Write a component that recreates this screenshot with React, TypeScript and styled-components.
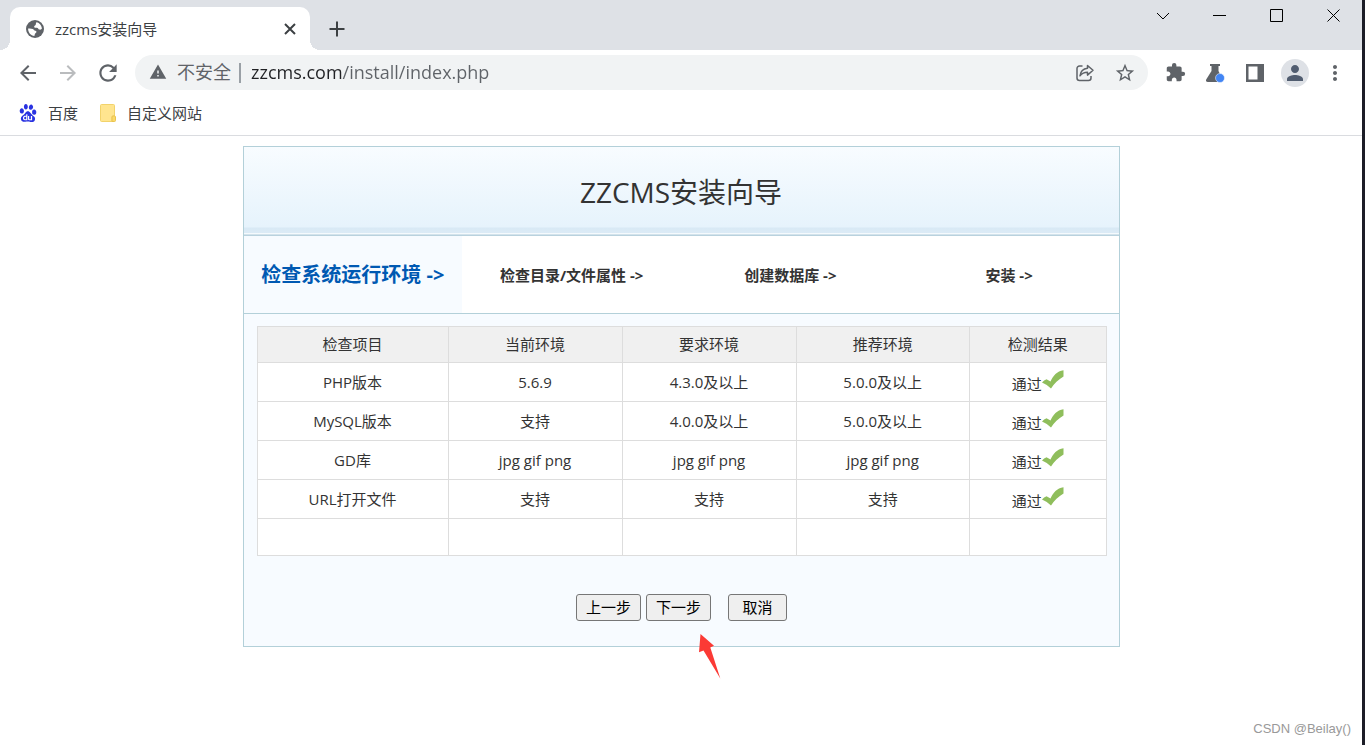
import React from 'react';
import styled, { createGlobalStyle } from 'styled-components';
import {
  MdArrowBack,
  MdArrowForward,
  MdExtension,
  MdMoreVert,
  MdPerson,
  MdRefresh,
  MdStarBorder,
  MdWarning,
} from 'react-icons/md';
import { SiBaidu } from 'react-icons/si';

const GlobalStyle = createGlobalStyle`
  * { box-sizing: border-box; }
  body {
    margin: 0;
    background: #fff;
    color: #333;
    font-family: "Open Sans", "Noto Sans CJK SC", sans-serif;
    font-size: 15px;
    line-height: 20px;
  }
  svg { display: block; flex: none; }
  button, input { font: inherit; }
`;

const Window = styled.div`
  position: relative;
  display: flex;
  flex-direction: column;
  min-height: 100vh;
  border-right: 3px solid #1c1d27;
`;

/* ---- Browser frame ---- */

const TabStrip = styled.header`
  display: flex;
  align-items: flex-start;
  height: 50px;
  padding-left: 10px;
  background: #dee1e6;
`;

const Tab = styled.div`
  position: relative;
  display: flex;
  align-items: center;
  width: 300px;
  height: 43px;
  margin-top: 7px;
  padding: 0 9px 0 16px;
  border-radius: 10px 10px 0 0;
  background: #fff;
  color: #3c4043;

  &::before,
  &::after {
    content: '';
    position: absolute;
    bottom: 0;
    width: 10px;
    height: 10px;
  }
  &::before {
    right: 100%;
    background: radial-gradient(circle at 0 0, transparent 10px, #fff 10px);
  }
  &::after {
    left: 100%;
    background: radial-gradient(circle at 100% 0, transparent 10px, #fff 10px);
  }
`;

const TabTitle = styled.span`
  flex: 1;
  margin-left: 11px;
  white-space: nowrap;
`;

const IconButton = styled.button<{ $width?: number; $height?: number; $color?: string }>`
  display: flex;
  flex: none;
  align-items: center;
  justify-content: center;
  width: ${(p) => p.$width ?? 40}px;
  height: ${(p) => p.$height ?? 40}px;
  padding: 0;
  border: 0;
  background: none;
  color: ${(p) => p.$color ?? '#5f6368'};
`;

const NewTab = styled(IconButton)`
  margin: 15px 0 0 13px;
`;

const WindowControls = styled.div`
  display: flex;
  margin-left: auto;
`;

const Toolbar = styled.nav`
  display: flex;
  align-items: center;
  height: 45px;
  padding: 0 7px 0 8px;
`;

const Omnibox = styled.form`
  display: flex;
  flex: 1;
  align-items: center;
  height: 35px;
  margin: 0 7px;
  padding: 0 3px 0 14px;
  border-radius: 18px;
  background: #f1f3f4;
  color: #5f6368;
  font-size: 18px;
`;

const Security = styled.button`
  display: flex;
  align-items: center;
  gap: 10px;
  height: 20px;
  padding: 0 8px 2px 0;
  border: 0;
  border-right: 2px solid #9aa0a6;
  background: none;
  color: inherit;
  white-space: nowrap;
`;

const Address = styled.input`
  flex: 1;
  min-width: 0;
  height: 30px;
  margin-left: 10px;
  padding: 0 0 2px;
  border: 0;
  outline: 0;
  background: linear-gradient(90deg, #202124 91px, #5f6368 91px);
  background-clip: text;
  -webkit-background-clip: text;
  color: transparent;
`;

const Avatar = styled.span`
  display: flex;
  align-items: center;
  justify-content: center;
  width: 28px;
  height: 28px;
  border-radius: 50%;
  background: #dee1e6;
  color: #515d70;
`;

const Bookmarks = styled.nav`
  display: flex;
  align-items: center;
  gap: 22px;
  height: 41px;
  padding: 0 19px 4px;
  border-bottom: 1px solid #dadce0;
`;

const Bookmark = styled.a`
  display: flex;
  align-items: center;
  gap: 11px;
  color: #3c4043;
  text-decoration: none;
`;

/* ---- Installer page ---- */

const Page = styled.main`
  padding: 10px 16px;
`;

const Panel = styled.section`
  max-width: 877px;
  margin: 0 auto;
  border: 1px solid #b3d0d9;
  background: #f7fbff;
`;

const Title = styled.h1`
  display: flex;
  align-items: center;
  justify-content: center;
  height: 89px;
  margin: 0;
  padding-top: 2px;
  border-bottom: 1px solid #b9d2de;
  background: linear-gradient(
    #f8fcff,
    #e6f3fc 80px,
    #d8e9f5 81px,
    #dcebf6 86px,
    #f5fafd 86px,
    #f5fafd 87px,
    #d3e3ec 87px
  );
  font-size: 28px;
  font-weight: 400;
  line-height: 40px;
`;

const Steps = styled.ol`
  display: grid;
  grid-template-columns: repeat(4, 1fr);
  height: 78px;
  margin: 0;
  padding: 0;
  border-bottom: 1px solid #b3d0d9;
  background: #fff;
  list-style: none;
`;

const Step = styled.li<{ $active?: boolean }>`
  display: flex;
  align-items: center;
  justify-content: center;
  background: ${(p) => (p.$active ? '#f7fbff' : 'none')};
  color: ${(p) => (p.$active ? '#0059b2' : '#333')};
  font-size: ${(p) => (p.$active ? 20 : 15)}px;
  font-weight: 700;
  white-space: nowrap;
`;

const Content = styled.div`
  padding: 12px 12px 25px 13px;
`;

const Checks = styled.table`
  width: 100%;
  border-collapse: collapse;
  table-layout: fixed;
  background: #fff;
  text-align: center;
`;

const Col = styled.col<{ $share: number }>`
  width: ${(p) => p.$share}%;
`;

const Head = styled.th`
  height: 36px;
  padding: 0 0 2px;
  border: 1px solid #ddd;
  background: #f0f0f0;
  font-weight: 400;
`;

const Cell = styled.td<{ $empty?: boolean }>`
  height: ${(p) => (p.$empty ? 37 : 39)}px;
  padding: 0;
  border: 1px solid #ddd;
`;

const Passed = styled.span`
  display: flex;
  align-items: flex-end;
  justify-content: center;

  svg { margin-bottom: 4px; }
`;

const Actions = styled.div`
  display: flex;
  justify-content: center;
  gap: 5px;
  margin-top: 38px;
`;

const ActionButton = styled.button<{ $spaced?: boolean }>`
  width: ${(p) => (p.$spaced ? 59 : 65)}px;
  height: 27px;
  margin-left: ${(p) => (p.$spaced ? 12 : 0)}px;
  padding: 0 0 2px;
  border: 1px solid #767676;
  border-radius: 3px;
  background: #efefef;
  color: #000;
`;

const Marked = styled.div`
  position: relative;
`;

const Pointer = styled.svg`
  position: absolute;
  top: 40px;
  left: 53px;
`;

const Watermark = styled.small`
  position: absolute;
  right: 11px;
  bottom: 6px;
  color: #999;
  font-family: "Liberation Sans", sans-serif;
  font-size: 13px;
`;

const CloseIcon = () => (
  <svg width="12" height="12" viewBox="0 0 12 12" fill="none" stroke="currentColor" strokeWidth="2">
    <path d="M1 1l10 10M11 1 1 11" />
  </svg>
);

const PlusIcon = () => (
  <svg width="16" height="16" viewBox="0 0 16 16" fill="none" stroke="currentColor" strokeWidth="2">
    <path d="M8 .500v15M.500 8h15" />
  </svg>
);

const GlobeIcon = () => (
  <svg width="18" height="18" viewBox="0 0 18 18">
    <circle cx="9" cy="9" r="9" fill="#5f6368" />
    <path
      d="M10.500 2.200C13.500 2.800 15.800 5.500 15.900 8.600C15.200 10 13.800 9.800 12.500 9.200C12.300 8 11.300 7.800 9.800 7.800C8.300 7.800 7.800 7 8.300 6.200C8.600 5.500 9.600 5.600 9.800 4.600C9.900 3.800 9.800 3 10.500 2.200z"
      fill="#fff"
    />
    <path
      d="M2.100 8.500C3.600 8.300 5.500 8.400 6.800 9C8 9.500 8 10.600 9.200 10.800C10.600 11 10.800 12 10 12.800C9 13.500 8.700 14.600 8.400 15.900C4.800 15.700 2 12.600 2.100 8.500z"
      fill="#fff"
    />
  </svg>
);

const ShareIcon = () => (
  <svg width="20" height="20" viewBox="0 0 20 20" fill="none" stroke="#5f6368" strokeWidth="1.500">
    <path d="M7.500 3H4.500A2.500 2.500 0 0 0 2 5.500V15a2.500 2.500 0 0 0 2.500 2.500h9A2.500 2.500 0 0 0 16 15v-2" />
    <path d="M12.500 2.500 18 7.300l-5.500 4.800V9.300C9.300 9.300 7 10.300 5 12.800c.500-4 3-7 7.500-7.500z" strokeLinejoin="round" />
  </svg>
);

const FlaskIcon = () => (
  <svg width="20" height="20" viewBox="0 0 20 20">
    <path d="M5 1h10v2h-1.500v5l4 8.500c.600 1.500-.300 2.500-1.500 2.500H2.800c-1.500 0-2.300-1.300-1.600-2.500L6.500 8V3H5z" fill="#5f6368" />
    <circle cx="15" cy="15" r="4.500" fill="#4285f4" stroke="#fff" strokeWidth="0.500" />
  </svg>
);

const SidePanelIcon = () => (
  <svg width="18" height="18" viewBox="0 0 18 18">
    <path d="M0 0h18v18H0zM2.500 2.500v13H11.500v-13z" fill="#5f6368" fillRule="evenodd" />
  </svg>
);

const FolderIcon = () => (
  <svg width="16" height="18" viewBox="0 0 16 18">
    <path d="M1.500.500h12a1 1 0 0 1 1 1V12h-1.500a1 1 0 0 0-1 1v4.500H1.500a1 1 0 0 1-1-1v-15a1 1 0 0 1 1-1z" fill="#ffe58f" stroke="#f2d36b" />
    <path d="M12 17.500V13a1 1 0 0 1 1-1h1.500a1 1 0 0 1 1 1v3.500a1 1 0 0 1-1 1z" fill="#fbd968" stroke="#e9c34f" />
  </svg>
);

const controlPaths: Record<string, string> = {
  搜索标签页: 'M1 4l6 6 6-6',
  最小化: 'M0 6.500h13',
  最大化: 'M.500.500h12v12H.500z',
  关闭: 'M.500.500l12 12M12.500.500l-12 12',
};

const ControlIcon = ({ d }: { d: string }) => (
  <svg width="14" height="13" viewBox="0 0 14 13" fill="none" stroke="#000" strokeWidth="1">
    <path d={d} />
  </svg>
);

const CheckIcon = () => (
  <svg width="22" height="20" viewBox="0 0 22 20">
    <path
      d="M0 12.500Q2 10 4.500 9.300L8.500 11.500C11 6 15 1 21.500.300V6.500C16.500 9.500 12 13.500 9 18.500Q5 14.500 0 12.500z"
      fill="#8fbe5c"
    />
  </svg>
);

const steps = ['检查系统运行环境 ->', '检查目录/文件属性 ->', '创建数据库 ->', '安装 ->'];

const columns = [
  { title: '检查项目', share: 22.5 },
  { title: '当前环境', share: 20.5 },
  { title: '要求环境', share: 20.5 },
  { title: '推荐环境', share: 20.4 },
  { title: '检测结果', share: 16.1 },
];

const checks = [
  ['PHP版本', '5.6.9', '4.3.0及以上', '5.0.0及以上'],
  ['MySQL版本', '支持', '4.0.0及以上', '5.0.0及以上'],
  ['GD库', 'jpg gif png', 'jpg gif png', 'jpg gif png'],
  ['URL打开文件', '支持', '支持', '支持'],
];

export default function App() {
  return (
    <Window>
      <GlobalStyle />
      <TabStrip>
        <Tab>
          <GlobeIcon />
          <TabTitle>zzcms安装向导</TabTitle>
          <IconButton $width={22} $height={22} $color="#3c4043" aria-label="关闭标签页">
            <CloseIcon />
          </IconButton>
        </Tab>
        <NewTab $width={28} $height={28} $color="#3c4043" aria-label="新标签页">
          <PlusIcon />
        </NewTab>
        <WindowControls>
          {Object.entries(controlPaths).map(([label, d]) => (
            <IconButton key={label} $width={57} $height={31} aria-label={label}>
              <ControlIcon d={d} />
            </IconButton>
          ))}
        </WindowControls>
      </TabStrip>

      <Toolbar>
        <IconButton aria-label="后退"><MdArrowBack size={24} /></IconButton>
        <IconButton $color="#babcbe" aria-label="前进"><MdArrowForward size={24} /></IconButton>
        <IconButton aria-label="重新加载"><MdRefresh size={26} /></IconButton>
        <Omnibox>
          <Security type="button">
            <MdWarning size={18} />
            不安全
          </Security>
          <Address type="text" aria-label="地址" defaultValue="zzcms.com/install/index.php" />
          <IconButton type="button" aria-label="分享"><ShareIcon /></IconButton>
          <IconButton type="button" aria-label="收藏"><MdStarBorder size={22} /></IconButton>
        </Omnibox>
        <IconButton aria-label="扩展程序"><MdExtension size={21} /></IconButton>
        <IconButton aria-label="实验"><FlaskIcon /></IconButton>
        <IconButton aria-label="侧边栏"><SidePanelIcon /></IconButton>
        <IconButton aria-label="用户"><Avatar><MdPerson size={24} /></Avatar></IconButton>
        <IconButton aria-label="菜单"><MdMoreVert size={24} /></IconButton>
      </Toolbar>

      <Bookmarks>
        <Bookmark href="#baidu">
          <SiBaidu size={18} color="#2932e1" />
          百度
        </Bookmark>
        <Bookmark href="#sites">
          <FolderIcon />
          自定义网站
        </Bookmark>
      </Bookmarks>

      <Page>
        <Panel>
          <Title>ZZCMS安装向导</Title>
          <Steps>
            {steps.map((step, i) => (
              <Step key={step} $active={i === 0}>{step}</Step>
            ))}
          </Steps>
          <Content>
            <Checks>
              <colgroup>
                {columns.map((c) => <Col key={c.title} $share={c.share} />)}
              </colgroup>
              <thead>
                <tr>{columns.map((c) => <Head key={c.title} scope="col">{c.title}</Head>)}</tr>
              </thead>
              <tbody>
                {checks.map((row) => (
                  <tr key={row[0]}>
                    {row.map((value, i) => <Cell key={i}>{value}</Cell>)}
                    <Cell><Passed>通过<CheckIcon /></Passed></Cell>
                  </tr>
                ))}
                <tr>{columns.map((c) => <Cell key={c.title} $empty />)}</tr>
              </tbody>
            </Checks>
            <Actions>
              <ActionButton type="button">上一步</ActionButton>
              <Marked>
                <ActionButton type="button">下一步</ActionButton>
                <Pointer width="22" height="45" viewBox="0 0 22 45">
                  <path d="M1.500 0 15 11.700 11.300 13.500 21.300 44.500 4.500 16.500 0 18.300z" fill="#fb3a35" />
                </Pointer>
              </Marked>
              <ActionButton type="button" $spaced>取消</ActionButton>
            </Actions>
          </Content>
        </Panel>
      </Page>
      <Watermark>CSDN @Beilay()</Watermark>
    </Window>
  );
}
